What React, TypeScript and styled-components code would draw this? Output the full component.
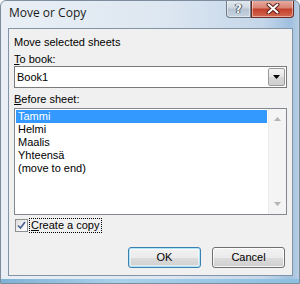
import React from 'react';
import styled, { createGlobalStyle } from 'styled-components';

const GlobalStyle = createGlobalStyle`
  html, body {
    margin: 0;
    padding: 0;
    background: #ffffff;
  }
`;

const Window = styled.div`
  position: relative;
  width: 300px;
  height: 284px;
  box-sizing: border-box;
  padding: 0 6px 7px 7px;
  display: flex;
  flex-direction: column;
  background: linear-gradient(to right, #e9eff5 0%, #dde7f1 55%, #c4d6e9 88%, #9fc0e0 97%, #b9cee2 100%);
  border: 1px solid #7d8d9d;
  border-radius: 6px 6px 0 0;
  overflow: hidden;
  font-family: 'Liberation Sans', Arial, sans-serif;
  font-size: 11px;
  color: #000;
  &::after {
    content: '';
    position: absolute;
    left: 0;
    right: 0;
    bottom: 0;
    height: 4px;
    background: linear-gradient(to right, #7fb2d6, #a9d0ea 40%, #8cbfe0 100%);
  }
`;

const TitleBar = styled.div`
  height: 27px;
  display: flex;
  justify-content: space-between;
  align-items: flex-start;
`;

const Title = styled.div`
  font-family: 'Open Sans', 'Noto Sans', sans-serif;
  font-size: 12px;
  line-height: 16px;
  padding-top: 4px;
  padding-left: 1px;
  color: #1a1a1a;
`;

const CaptionButtons = styled.div`
  display: flex;
  margin-top: -1px;
  margin-right: -1px;
`;

const CaptionButton = styled.div<{ $close?: boolean }>`
  width: ${(p) => (p.$close ? '43px' : '25px')};
  height: 18px;
  box-sizing: border-box;
  display: flex;
  align-items: center;
  justify-content: center;
  border: 1px solid ${(p) => (p.$close ? '#6d2a22' : '#6e7c8a')};
  border-top: none;
  border-radius: ${(p) => (p.$close ? '0 0 4px 0' : '0 0 0 4px')};
  background: ${(p) =>
    p.$close
      ? 'linear-gradient(to bottom, #e8b1a6 0%, #d88474 45%, #c4402c 55%, #d2694f 100%)'
      : 'linear-gradient(to bottom, #e4eaf0 0%, #cfd8e2 45%, #b6c3d1 55%, #c7d3df 100%)'};
  box-shadow: inset 0 0 0 1px rgba(255, 255, 255, 0.45);
`;

const HelpGlyph = styled.span`
  font-family: 'DejaVu Sans', sans-serif;
  font-weight: bold;
  font-size: 12px;
  line-height: 12px;
  color: #f4f6f8;
  text-shadow: 0 0 1px #3e4a56, 0 0 1px #3e4a56, 1px 0 0 #5b6774, -1px 0 0 #5b6774;
`;

const Client = styled.div`
  flex: 1;
  display: flex;
  flex-direction: column;
  background: #f0f0f0;
  border: 1px solid #8394a6;
  padding: 7px 5px 0 5px;
`;

const Label = styled.div<{ $gap?: number }>`
  line-height: 13px;
  height: 13px;
  margin-top: ${(p) => p.$gap ?? 0}px;
  white-space: nowrap;
`;

const Key = styled.span`
  text-decoration: underline;
`;

const Combo = styled.div`
  height: 22px;
  box-sizing: border-box;
  border: 1px solid #7a7a7a;
  background: #fff;
  display: flex;
  align-items: center;
  padding: 0 1px 0 2px;
`;

const ComboText = styled.div`
  flex: 1;
  line-height: 13px;
  padding-top: 1px;
`;

const DropButton = styled.div`
  width: 17px;
  height: 18px;
  box-sizing: border-box;
  border: 1px solid #9a9a9a;
  border-radius: 2px;
  background: linear-gradient(to bottom, #f3f3f3 0%, #e6e6e6 50%, #d7d7d7 51%, #cfcfcf 100%);
  display: flex;
  align-items: center;
  justify-content: center;
`;

const ListBox = styled.div`
  margin-top: 2px;
  height: 107px;
  box-sizing: border-box;
  border: 1px solid #828790;
  background: #fff;
  display: flex;
`;

const Items = styled.div`
  flex: 1;
  padding: 1px 0 0 1px;
`;

const Item = styled.div<{ $selected?: boolean }>`
  height: 13px;
  line-height: 13px;
  padding-left: 2px;
  margin-right: 1px;
  background: ${(p) => (p.$selected ? '#3399ff' : 'transparent')};
  color: ${(p) => (p.$selected ? '#fff' : '#000')};
`;

const ScrollBar = styled.div`
  width: 17px;
  background: #f4f4f4;
  border-left: 1px solid #ececec;
  display: flex;
  flex-direction: column;
  justify-content: space-between;
  align-items: center;
  padding: 8px 0 8px;
`;

const CheckRow = styled.div`
  margin-top: 3px;
  height: 15px;
  display: flex;
  align-items: center;
`;

const CheckBox = styled.div`
  width: 13px;
  height: 13px;
  box-sizing: border-box;
  margin-left: 1px;
  border: 1px solid #8e8f8f;
  background: linear-gradient(135deg, #dcdcdc 0%, #f4f4f4 60%, #ffffff 100%);
  display: flex;
  align-items: center;
  justify-content: center;
`;

const CheckLabel = styled.span`
  margin-left: 2px;
  padding: 0 1px;
  line-height: 13px;
  outline: 1px dotted #000;
`;

const ButtonRow = styled.div`
  margin-top: 14px;
  display: flex;
  justify-content: flex-end;
  gap: 11px;
  margin-right: 2px;
`;

const Button = styled.div<{ $default?: boolean }>`
  width: 73px;
  height: 21px;
  box-sizing: border-box;
  border: 1px solid ${(p) => (p.$default ? '#3c7fb1' : '#707070')};
  border-radius: 3px;
  background: linear-gradient(to bottom, #f2f2f2 0%, #ebebeb 50%, #dddddd 51%, #cfcfcf 100%);
  box-shadow: ${(p) =>
    p.$default ? 'inset 0 0 0 1px #aee4f8, inset 0 0 0 2px rgba(255,255,255,0.5)' : 'inset 0 0 0 1px rgba(255,255,255,0.8)'};
  display: flex;
  align-items: center;
  justify-content: center;
  line-height: 13px;
`;

const Arrow = ({ up, color }: { up?: boolean; color: string }) => (
  <svg width="7" height="4" viewBox="0 0 7 4">
    <path d={up ? 'M0 4 L3.5 0 L7 4 Z' : 'M0 0 L7 0 L3.5 4 Z'} fill={color} />
  </svg>
);

const sheets = ['Tammi', 'Helmi', 'Maalis', 'Yhteensä', '(move to end)'];

export default function App() {
  return (
    <>
      <GlobalStyle />
      <Window>
        <TitleBar>
          <Title>Move or Copy</Title>
          <CaptionButtons>
            <CaptionButton>
              <HelpGlyph>?</HelpGlyph>
            </CaptionButton>
            <CaptionButton $close>
              <svg width="14" height="11" viewBox="0 0 14 11">
                <path d="M2.5 1.5 L11.5 9.5 M11.5 1.5 L2.5 9.5" stroke="#5a1e16" strokeWidth="4" strokeLinecap="round" />
                <path d="M2.5 1.5 L11.5 9.5 M11.5 1.5 L2.5 9.5" stroke="#ffffff" strokeWidth="2" strokeLinecap="round" />
              </svg>
            </CaptionButton>
          </CaptionButtons>
        </TitleBar>
        <Client>
          <Label>Move selected sheets</Label>
          <Label $gap={4}>
            <Key>T</Key>o book:
          </Label>
          <Combo>
            <ComboText>Book1</ComboText>
            <DropButton>
              <Arrow color="#000" />
            </DropButton>
          </Combo>
          <Label $gap={5}>
            <Key>B</Key>efore sheet:
          </Label>
          <ListBox>
            <Items>
              {sheets.map((s, i) => (
                <Item key={s} $selected={i === 0}>
                  {s}
                </Item>
              ))}
            </Items>
            <ScrollBar>
              <Arrow up color="#b4b4b4" />
              <Arrow color="#b4b4b4" />
            </ScrollBar>
          </ListBox>
          <CheckRow>
            <CheckBox>
              <svg width="9" height="9" viewBox="0 0 9 9">
                <path d="M1 4.5 L3.5 7 L8 1" stroke="#4c6290" strokeWidth="1.7" fill="none" />
              </svg>
            </CheckBox>
            <CheckLabel>
              <Key>C</Key>reate a copy
            </CheckLabel>
          </CheckRow>
          <ButtonRow>
            <Button $default>OK</Button>
            <Button>Cancel</Button>
          </ButtonRow>
        </Client>
      </Window>
    </>
  );
}
